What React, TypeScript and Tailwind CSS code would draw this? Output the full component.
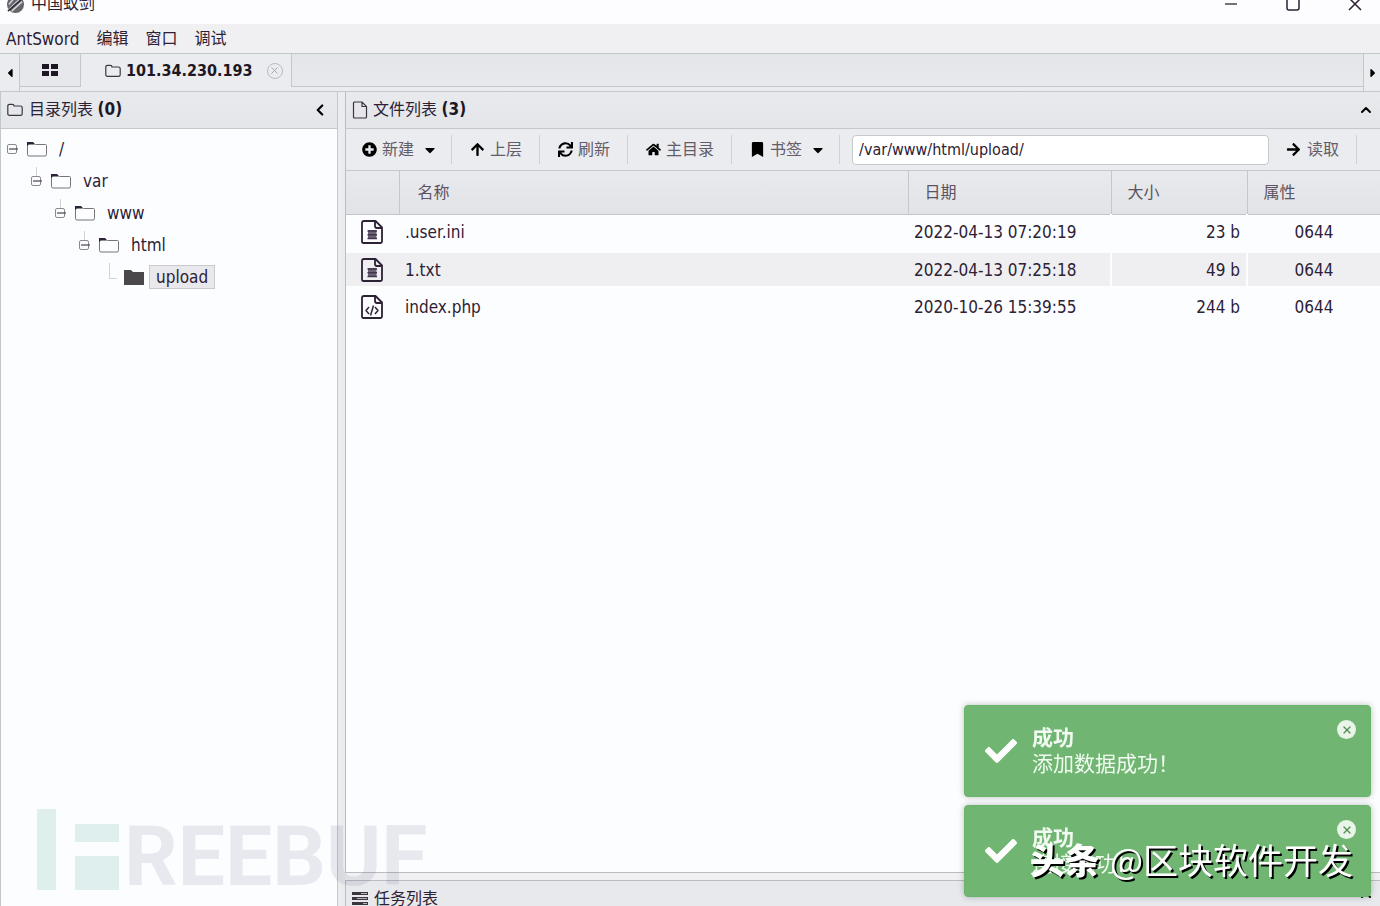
import { useState } from "react";
import type { ReactNode } from "react";
import {
  FaArrowRight,
  FaArrowUp,
  FaBookmark,
  FaCaretDown,
  FaCaretLeft,
  FaCaretRight,
  FaCheck,
  FaHome,
  FaPlusCircle,
  FaSync,
  FaThLarge,
} from "react-icons/fa";
import { ChevronLeft, ChevronUp, X } from "lucide-react";

interface FileRow {
  name: string;
  date: string;
  size: string;
  attr: string;
  kind: "text" | "code";
}

interface TreeItem {
  label: string;
  indent: string;
  root?: boolean;
  leaf?: boolean;
}

const files: FileRow[] = [
  { name: ".user.ini", date: "2022-04-13 07:20:19", size: "23 b", attr: "0644", kind: "text" },
  { name: "1.txt", date: "2022-04-13 07:25:18", size: "49 b", attr: "0644", kind: "text" },
  { name: "index.php", date: "2020-10-26 15:39:55", size: "244 b", attr: "0644", kind: "code" },
];

const tree: TreeItem[] = [
  { label: "/", indent: "pl-[5px]", root: true },
  { label: "var", indent: "pl-[29px]" },
  { label: "www", indent: "pl-[53px]" },
  { label: "html", indent: "pl-[77px]" },
  { label: "upload", indent: "pl-[102px]", leaf: true },
];

const notices = [
  { id: 1, title: "成功", text: "添加数据成功！" },
  { id: 2, title: "成功", text: "连接成功！" },
];

function SmallFolder() {
  return (
    <svg className="w-4 h-4 shrink-0" viewBox="0 0 16 16" fill="none" stroke="#3b3640" strokeWidth="1.2">
      <path d="M.8 4c0-1 .7-1.700 1.700-1.700h2.800C6.300 2.300 7 3 7 4h6.500c1 0 1.700.7 1.700 1.700v6c0 1-.7 1.700-1.700 1.700h-11c-1 0-1.700-.7-1.700-1.700z" />
    </svg>
  );
}

function TreeFolder({ open }: { open?: boolean }) {
  if (open) {
    return (
      <svg className="w-[22px] h-4 shrink-0" viewBox="0 0 22 16">
        <path d="M1 1h7l2 2h11v13H1z" fill="#4b484b" />
      </svg>
    );
  }
  return (
    <svg className="w-[22px] h-4 shrink-0" viewBox="0 0 22 16" fill="none">
      <path d="M1.500 2v11.500q0 1.500 1.500 1.500h16q1.500 0 1.500-1.500v-9q0-1-1-1h-10" stroke="#77737d" />
      <path d="M1 1h6l2.500 2.500H3L1 5z" fill="#2c2135" />
    </svg>
  );
}

// Expander box, with the stub of the line that comes down from the parent
function Expander({ root, leaf }: { root?: boolean; leaf?: boolean }) {
  return (
    <svg className="w-3.5 h-8 shrink-0" viewBox="0 0 14 32" fill="none" stroke="#8b8792">
      {!root && <path d={leaf ? "M6.500 2v15.500H17" : "M6.500 2v9"} stroke="#d0d2d8" />}
      {!leaf && (
        <>
          <rect x="1.500" y="11.500" width="9" height="9" rx="1.500" />
          <path d="M3 16h9" stroke="#55505e" strokeWidth="1.300" />
        </>
      )}
    </svg>
  );
}

function FileIcon({ kind }: { kind: FileRow["kind"] }) {
  return (
    <svg className="w-[22px] h-6 block" viewBox="0 0 22 24" fill="none" stroke="#2c2135" strokeWidth="1.800" strokeLinejoin="round">
      <path d="M3 1h11.500L21 7.500V21.500Q21 23 19.500 23H2.500Q1 23 1 21.500V3Q1 1 3 1z" />
      <path d="M14 1.500V6Q14 8 16 8h4.500" />
      {kind === "text" ? (
        <>
          <path d="M7 10h8.500v9H7z" fill="#6d6478" stroke="none" />
          <path d="M6.500 11h9.500M6.500 14.800h9.500M6.500 18.500h9.500" stroke="#40354c" strokeWidth="1.500" />
        </>
      ) : (
        <path d="M8 12l-3 3.500 3 3.500M14 12l3 3.500-3 3.500M12.500 10.500l-3 10" strokeWidth="1.500" />
      )}
    </svg>
  );
}

function FreebufMark() {
  return (
    <div className="fixed left-9 bottom-[15px] z-10 flex items-end pointer-events-none">
      <svg className="w-[84px] h-[83px]" viewBox="0 0 84 83" fill="#4aa88c" fillOpacity="0.16">
        <rect x="1" y="1" width="19" height="81" />
        <rect x="39" y="16" width="44" height="18" />
        <rect x="39" y="48" width="44" height="34" />
      </svg>
      <span className="ml-1 text-[84px] leading-[68px] font-bold text-[#3c3c64]/10 font-[Roboto,sans-serif]">REEBUF</span>
    </div>
  );
}

function ToolButton({ icon, label, caret }: { icon: ReactNode; label: string; caret?: boolean }) {
  return (
    <button type="button" className="flex items-center h-[29px] px-[17px] border-r border-[#cfd2d5] text-base text-[#625c6b] whitespace-nowrap">
      <span className="w-4 mr-[5px] text-[15px] text-black flex justify-center">{icon}</span>
      {label}
      {caret && <FaCaretDown className="ml-2 -mr-1 text-black" />}
    </button>
  );
}

export default function App() {
  const [path, setPath] = useState("/var/www/html/upload/");
  const [open, setOpen] = useState(notices.map((n) => n.id));

  return (
    <div className="h-screen flex flex-col overflow-hidden bg-[#fcfdff] text-[17px] leading-6 text-[#2c2135] font-['DejaVu_Sans_Condensed','Noto_Sans_CJK_SC',sans-serif]">
      <header className="h-10 -mt-4 shrink-0 flex items-center justify-between pl-1.5 pr-[18px] bg-[#fdfdff]">
        <div className="flex items-center gap-1.5 text-base">
          <svg className="w-[19px] h-[19px]" viewBox="0 0 20 20">
            <circle cx="10" cy="10" r="9" fill="#67666c" />
            <path d="M3 15L16 3M6 17L17 7M3 10l5-6" stroke="#d5d5d8" strokeWidth="1.500" />
            <path d="M2 17L18 3" stroke="#2e2c33" strokeWidth="1.500" />
          </svg>
          <span>中国蚁剑</span>
        </div>
        <div className="flex items-center gap-12">
          <button type="button" aria-label="Minimize">
            <svg className="w-3.5 h-3.5" viewBox="0 0 14 14" stroke="#2c2135" strokeWidth="1.300"><path d="M1 7h12" /></svg>
          </button>
          <button type="button" aria-label="Maximize">
            <svg className="w-3.5 h-3.5" viewBox="0 0 14 14" fill="none" stroke="#2c2135" strokeWidth="1.500"><rect x="1" y="1" width="12" height="12" rx="2" /></svg>
          </button>
          <button type="button" aria-label="Close">
            <svg className="w-3.5 h-3.5" viewBox="0 0 14 14" stroke="#2c2135" strokeWidth="1.500"><path d="M1 1l12 12M13 1L1 13" /></svg>
          </button>
        </div>
      </header>

      <nav className="h-[29px] shrink-0 flex items-center gap-[17px] pl-1.5 bg-[#f0f0f3]">
        <button type="button">AntSword</button>
        <button type="button" className="text-base">编辑</button>
        <button type="button" className="text-base">窗口</button>
        <button type="button" className="text-base">调试</button>
      </nav>

      <div className="h-[39px] shrink-0 flex border-y border-[#c3c8cb] bg-[#ebecef]">
        <button type="button" aria-label="Scroll left" className="w-5 flex items-center justify-center border-r border-[#c3c8cb] text-sm text-black">
          <FaCaretLeft />
        </button>
        <button type="button" aria-label="Home" className="w-[61px] h-[33px] flex items-center justify-center border-r border-b border-[#c3c8cb] bg-[#e7e8eb] text-base text-black">
          <svg className="w-4 h-3" viewBox="0 0 16 12">
            <path d="M0 0h7v5H0zM9 0h7v5H9zM0 7h7v5H0zM9 7h7v5H9z" fill="#1d1724" />
          </svg>
        </button>
        <div className="w-[210px] flex items-center pl-6 pb-1 text-base font-bold text-[#1d1724]">
          <SmallFolder />
          <span className="ml-[5px]">101.34.230.193</span>
          <button type="button" aria-label="Close tab" className="ml-3.5 w-4 h-4 flex items-center justify-center rounded-full border border-[#b9bbc0] text-[#a3a4aa]">
            <X size={11} strokeWidth={2} />
          </button>
        </div>
        <div className="flex-1 h-[33px] border-l border-b border-[#c3c8cb] bg-linear-to-b from-[#e4e5e9] to-[#e8e9ec]" />
        <button type="button" aria-label="Scroll right" className="w-[17px] flex items-center justify-end border-l border-[#c3c8cb] text-sm text-black">
          <FaCaretRight />
        </button>
      </div>

      <div className="flex-1 min-h-0 flex">
        <aside className="w-[338px] shrink-0 flex flex-col border-x border-[#c3c8cb]">
          <div className="h-[37px] shrink-0 flex items-center pl-1.5 pr-2 border-b border-[#c3c8cb] bg-linear-to-b from-[#e9eaed] to-[#e4e5e9]">
            <SmallFolder />
            <h2 className="ml-1.5 text-base">
              目录列表 <b className="text-[17px] text-[#1d1724]">(0)</b>
            </h2>
            <button type="button" aria-label="Collapse" className="ml-auto text-black">
              <ChevronLeft size={18} strokeWidth={3} />
            </button>
          </div>
          <ul className="pt-1">
            {tree.map((item) => (
              <li key={item.label} className={`flex items-center ${item.indent}`}>
                <Expander root={item.root} leaf={item.leaf} />
                <span className="ml-1.5"><TreeFolder open={item.leaf} /></span>
                {item.leaf ? (
                  <span className="ml-1 px-1.5 leading-[22px] border border-[#c9cacf] bg-[#e9e8ed]">{item.label}</span>
                ) : (
                  <span className="ml-[11px]">{item.label}</span>
                )}
              </li>
            ))}
          </ul>
        </aside>

        <div className="w-[7px] shrink-0 bg-[#ebecef]" />

        <main className="flex-1 min-w-0 flex flex-col">
          <section className="flex-1 min-h-0 flex flex-col border-l border-b border-[#b9bdc1]">
            <div className="h-[37px] shrink-0 flex items-center px-1.5 border-b border-[#c3c8cb] bg-linear-to-b from-[#e9eaed] to-[#e4e5e9]">
              <svg className="w-4 h-[18px]" viewBox="0 0 16 18" fill="none" stroke="#3b3640" strokeWidth="1.200">
                <path d="M2 1h8l4.500 4.500V16q0 1-1 1H2.500q-1 0-1-1V2q0-1 1-1zM10 1v4.500h4.500" />
              </svg>
              <h2 className="ml-[5px] text-base">
                文件列表 <b className="text-[17px] text-[#1d1724]">(3)</b>
              </h2>
              <button type="button" aria-label="Collapse" className="ml-auto text-black">
                <ChevronUp size={16} strokeWidth={3} />
              </button>
            </div>

            <div className="h-[42px] shrink-0 flex items-center border-b border-[#c3c8cb] bg-[#ebecef]">
              <div className="flex -ml-0.5">
                <ToolButton icon={<FaPlusCircle />} label="新建" caret />
                <ToolButton icon={<FaArrowUp />} label="上层" />
                <ToolButton icon={<FaSync />} label="刷新" />
                <ToolButton icon={<FaHome />} label="主目录" />
                <ToolButton icon={<FaBookmark />} label="书签" caret />
              </div>
              <input
                type="text"
                aria-label="路径"
                value={path}
                onChange={(e) => setPath(e.target.value)}
                className="flex-1 min-w-0 h-[30px] ml-3 px-1.5 rounded-sm border border-[#c6c9cd] bg-white text-base outline-none"
              />
              <ToolButton icon={<FaArrowRight />} label="读取" />
              <div className="w-[23px]" />
            </div>

            <table className="w-full table-fixed border-collapse">
              <colgroup>
                <col className="w-[53px]" />
                <col />
                <col className="w-[203px]" />
                <col className="w-[136px]" />
                <col className="w-[133px]" />
              </colgroup>
              <thead className="bg-linear-to-b from-[#e9eaed] to-[#e2e3e7] text-base text-[#5a5463]">
                <tr className="h-[43px] border-b border-[#bfc6c9]">
                  <th aria-label="类型" />
                  <th className="pt-0.5 pl-[18px] text-left font-normal border-l border-[#c3c8cb]">名称</th>
                  <th className="pt-0.5 pl-4 text-left font-normal border-l border-[#c3c8cb]">日期</th>
                  <th className="pt-0.5 pl-4 text-left font-normal border-l border-[#c3c8cb]">大小</th>
                  <th className="pt-0.5 pl-4 text-left font-normal border-l border-[#c3c8cb]">属性</th>
                </tr>
              </thead>
              <tbody>
                {files.map((f) => (
                  <tr key={f.name} className="h-[37px] border-b-4 border-[#fcfdff] even:bg-[#efeff2]">
                    <td className="pl-[15px]"><FileIcon kind={f.kind} /></td>
                    <td className="pl-1.5">{f.name}</td>
                    <td className="pl-1.5">{f.date}</td>
                    <td className="pr-1.5 text-right border-l-2 border-[#fcfdff]">{f.size}</td>
                    <td className="text-center border-l-2 border-[#fcfdff]">{f.attr}</td>
                  </tr>
                ))}
              </tbody>
            </table>
          </section>

          <div className="h-[7px] shrink-0 bg-[#f1f1f4]" />

          <footer className="h-[26px] shrink-0 flex items-start pt-1.5 pl-1.5 pr-1.5 overflow-hidden border-l border-t border-[#b9bdc1] bg-[#e8e9ec]">
            <svg className="w-4 h-4 mt-1" viewBox="0 0 16 16">
              <path d="M0 1h16v3H0zM0 6h16v3H0zM0 11h16v3H0z" fill="#3b3640" />
              <path d="M9 2.500h6M5 7.500h10M11 12.500h4" stroke="#b5b3ba" />
            </svg>
            <h2 className="ml-1.5 text-base leading-6">任务列表</h2>
            <button type="button" aria-label="Expand" className="ml-auto text-black">
              <ChevronUp size={16} strokeWidth={3} />
            </button>
          </footer>
        </main>
      </div>

      <FreebufMark />

      <div className="fixed right-[9px] bottom-[9px] z-20 w-[407px] flex flex-col gap-2">
        {notices.filter((n) => open.includes(n.id)).map((n) => (
          <div key={n.id} role="status" className="relative h-[92px] flex items-center pl-5 rounded border border-[#66b568] bg-[#70b672] text-white shadow-[0_0_6px_rgba(0,0,0,0.25)]">
            <FaCheck className="text-[32px]" />
            <div className="ml-[15px] text-[21px] leading-[26px] text-[#f0faf0]">
              <p className="font-bold">{n.title}</p>
              <p>{n.text}</p>
            </div>
            <button
              type="button"
              aria-label="关闭"
              onClick={() => setOpen(open.filter((id) => id !== n.id))}
              className="absolute top-3.5 right-3.5 w-[19px] h-[19px] flex items-center justify-center rounded-full bg-[#eaf5ea] text-[#4f8d52]"
            >
              <X size={12} strokeWidth={2.5} />
            </button>
          </div>
        ))}
      </div>

      <div className="fixed right-[27px] bottom-[22px] z-30 flex items-center gap-2.5 whitespace-nowrap text-[35px] leading-[50px] text-white pointer-events-none [text-shadow:2px_2px_0_#000] font-['Noto_Sans_CJK_SC',sans-serif]">
        <span className="font-black">头条</span>
        <span>@区块软件开发</span>
      </div>
    </div>
  );
}
